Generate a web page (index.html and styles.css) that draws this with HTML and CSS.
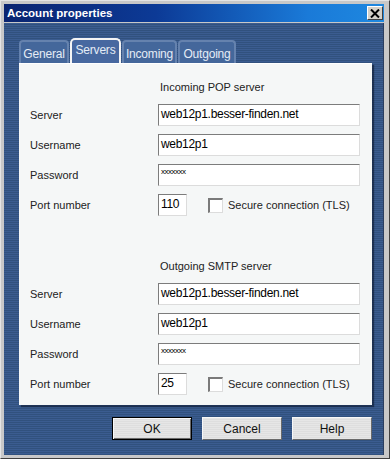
FILE: index.html
```html
<!DOCTYPE html>
<html lang="en">
<head>
    <meta charset="UTF-8">
    <title>Account properties</title>
    <link rel="stylesheet" href="styles.css">
</head>
<body>

<div class="window">
    <!-- Title bar -->
    <div class="titlebar">
        <span class="title">Account properties</span>
        <span class="close">
            <svg width="10" height="9" viewBox="0 0 10 9">
                <path d="M1 0.5 L9 8.5 M9 0.5 L1 8.5" stroke="#000" stroke-width="2" fill="none"/>
            </svg>
        </span>
    </div>

    <div class="client">
        <div class="tabs">
            <div class="tab tab-general">General</div>
            <div class="tab tab-servers active">Servers</div>
            <div class="tab tab-incoming">Incoming</div>
            <div class="tab tab-outgoing">Outgoing</div>
        </div>

        <div class="panel">
            <div class="section">
                <div class="heading">Incoming POP server</div>
                <div class="row">
                    <label>Server</label>
                    <div class="field">web12p1.besser-finden.net</div>
                </div>
                <div class="row">
                    <label>Username</label>
                    <div class="field">web12p1</div>
                </div>
                <div class="row">
                    <label>Password</label>
                    <div class="field secret">xxxxxxx</div>
                </div>
                <div class="row">
                    <label>Port number</label>
                    <div class="field port">110</div>
                    <span class="check"></span>
                    <span class="check-label">Secure connection (TLS)</span>
                </div>
            </div>

            <div class="section second">
                <div class="heading">Outgoing SMTP server</div>
                <div class="row">
                    <label>Server</label>
                    <div class="field">web12p1.besser-finden.net</div>
                </div>
                <div class="row">
                    <label>Username</label>
                    <div class="field">web12p1</div>
                </div>
                <div class="row">
                    <label>Password</label>
                    <div class="field secret">xxxxxxx</div>
                </div>
                <div class="row">
                    <label>Port number</label>
                    <div class="field port">25</div>
                    <span class="check"></span>
                    <span class="check-label">Secure connection (TLS)</span>
                </div>
            </div>
        </div>

        <div class="buttons">
            <button class="btn default">OK</button>
            <button class="btn">Cancel</button>
            <button class="btn">Help</button>
        </div>
    </div>
</div>

</body>
</html>
```

FILE: styles.css
```css
* {
    box-sizing: border-box;
}

body {
    margin: 0;
    padding: 0;
    font-family: 'Liberation Sans', Arial, sans-serif;
    background: #c4c4c4;
}

.window {
    width: 390px;
    height: 459px;
    padding: 3px 5px 3px 3px;
    background: #c8c8c8;
    border-top: 1px solid #e4e4e4;
    border-left: 1px solid #e4e4e4;
    border-right: 1px solid #404040;
    border-bottom: 1px solid #404040;
    display: flex;
    flex-direction: column;
}

/* Title bar */
.titlebar {
    height: 18px;
    background: linear-gradient(to right, #0a2470 0%, #0c3a96 40%, #1a7ad8 80%, #1e88e0 100%);
    display: flex;
    align-items: center;
    justify-content: space-between;
    padding: 0 1px 0 3px;
}

.title {
    color: #fff;
    font-weight: bold;
    font-size: 11.5px;
}

.close {
    width: 16px;
    height: 14px;
    background: #d4d0c8;
    border-top: 1px solid #fff;
    border-left: 1px solid #fff;
    border-right: 1px solid #404040;
    border-bottom: 1px solid #404040;
    display: flex;
    align-items: center;
    justify-content: center;
}

/* Client area */
.client {
    flex: 1;
    margin-top: 1px;
    padding: 15px 13px 0 15px;
    background: repeating-linear-gradient(to bottom, #3b5c90 0, #3b5c90 1px, #31517e 1px, #31517e 2px);
    border-right: 1px solid #2a3e60;
}

.tabs {
    display: flex;
    align-items: flex-end;
    height: 25px;
}

.tab {
    height: 23px;
    padding-top: 5px;
    margin-right: 1px;
    text-align: center;
    color: #e4ecf6;
    font-size: 12px;
    letter-spacing: -0.2px;
    background: #44679b;
    border: 2px solid #6582ae;
    border-bottom: none;
    border-radius: 4px 4px 0 0;
}

.tab-general { width: 50px; }
.tab-servers { width: 51px; }
.tab-incoming { width: 55px; }
.tab-outgoing { width: 58px; }

.tab.active {
    height: 25px;
    padding-top: 3px;
    background: #4768a0;
    border-color: #f4f4f4;
    border-radius: 5px 5px 0 0;
}

/* Panel */
.panel {
    width: 353px;
    height: 342px;
    background: #f5f7f7;
    padding: 15px 12px 10px 11px;
    box-shadow: 2px 2px 1px rgba(10, 20, 40, 0.55);
    border-top: 1px solid #fff;
}

.section.second {
    margin-top: 42px;
}

.heading {
    height: 16px;
    line-height: 16px;
    margin-left: 130px;
    margin-bottom: 9px;
    font-size: 11px;
    color: #222;
}

.row {
    display: flex;
    align-items: center;
    height: 22px;
    margin-bottom: 8px;
}

.row:last-child {
    margin-bottom: 0;
}

.row label {
    width: 128px;
    flex-shrink: 0;
    font-size: 11px;
    color: #222;
}

.field {
    width: 202px;
    height: 22px;
    flex-shrink: 0;
    line-height: 19px;
    padding-left: 2px;
    background: #fff;
    font-size: 12px;
    letter-spacing: -0.3px;
    color: #000;
    border-top: 1px solid #7c7c7c;
    border-left: 1px solid #7c7c7c;
    border-right: 1px solid #dcdcdc;
    border-bottom: 1px solid #dcdcdc;
}

.field.secret {
    font-size: 8px;
    line-height: 10px;
    padding-top: 2px;
    letter-spacing: -0.5px;
}

.field.port {
    width: 29px;
}

.check {
    width: 15px;
    height: 15px;
    flex-shrink: 0;
    margin-left: 21px;
    background: #fff;
    border-top: 2px solid #7a7a7a;
    border-left: 2px solid #7a7a7a;
    border-right: 1px solid #dcdcdc;
    border-bottom: 1px solid #dcdcdc;
}

.check-label {
    margin-left: 5px;
    font-size: 11px;
    white-space: nowrap;
    color: #222;
}

/* Buttons */
.buttons {
    display: flex;
    justify-content: flex-end;
    gap: 10px;
    margin-top: 12px;
    width: 353px;
}

.btn {
    width: 80px;
    height: 23px;
    padding: 0;
    font-family: 'Liberation Sans', Arial, sans-serif;
    font-size: 12px;
    color: #111;
    background: repeating-linear-gradient(to bottom, #e6e6e6 0, #e6e6e6 1px, #dedede 1px, #dedede 2px);
    border-top: 1px solid #f8f8f8;
    border-left: 1px solid #f8f8f8;
    border-right: 1px solid #6a6a6a;
    border-bottom: 1px solid #6a6a6a;
}

.btn.default {
    border: 1px solid #000;
    box-shadow: inset 1px 1px 0 #f8f8f8, inset -1px -1px 0 #6a6a6a;
}
```
